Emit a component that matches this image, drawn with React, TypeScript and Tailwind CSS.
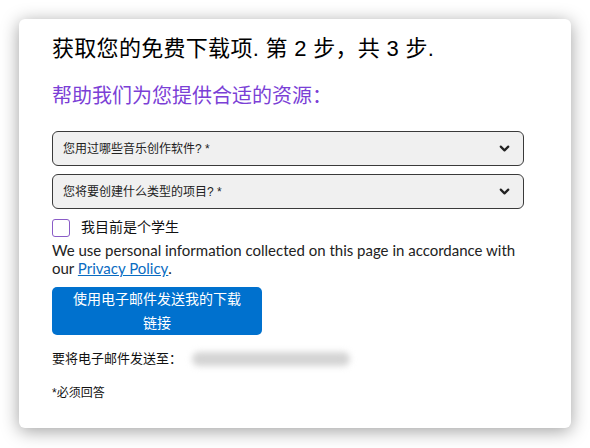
import { ChevronDown } from 'lucide-react';

const cjk = 'font-["Liberation_Sans","Noto_Sans_CJK_SC",sans-serif]';

function SelectBox({ label }: { label: string }) {
  return (
    <div className="flex h-[35px] items-center justify-between rounded-md border border-[#3a3a3a] bg-[#f0f0f0] pl-[10px] pr-[11px]">
      <span className="text-[12px] text-[#222]">{label}</span>
      <ChevronDown size={15} strokeWidth={3.5} className="text-[#222]" />
    </div>
  );
}

export default function App() {
  return (
    <div className={`h-[448px] w-[590px] bg-white pl-[19px] pt-[19px] ${cjk}`}>
      <div className="h-[409px] w-[552px] rounded-md bg-white pl-[33px] pr-[47px] pt-[16px] shadow-[0_3px_18px_rgba(0,0,0,0.38)]">
        <h1 className="text-[22px] leading-[28px] tracking-[0.3px] text-black">获取您的免费下载项. 第 2 步，共 3 步.</h1>
        <h2 className="mt-[19px] text-[20px] leading-[28px] text-[#7b3fd6]">帮助我们为您提供合适的资源：</h2>

        <div className="mt-[21px] flex flex-col gap-[8px]">
          <SelectBox label="您用过哪些音乐创作软件? *" />
          <SelectBox label="您将要创建什么类型的项目? *" />
        </div>

        <label className="mt-[8px] flex items-center gap-[11px]">
          <span className="h-[18px] w-[18px] rounded-[3px] border-[1.5px] border-[#8a5cc7] bg-white" />
          <span className="text-[14px] text-[#111]">我目前是个学生</span>
        </label>

        <div className='mt-[3px] font-["Lato",sans-serif] text-[15px] leading-[18px] text-[#222]'>
          <p className="whitespace-nowrap">We use personal information collected on this page in accordance with</p>
          <p>
            our <a className="inline-block text-[#0a6cc2] underline">Privacy Policy</a>.
          </p>
        </div>

        <button className="mt-[10px] flex h-[48px] w-[210px] items-center justify-center rounded-[5px] bg-[#0071ce] px-[20px] text-[14px] leading-[24px] text-white">
          使用电子邮件发送我的下载链接
        </button>

        <div className="mt-[15px] flex items-center gap-[10px]">
          <span className="text-[13px] leading-[18px] text-[#111]">要将电子邮件发送至：</span>
          <span className="h-[14px] w-[158px] rounded-full bg-[#d4d4d4] blur-[3px]" />
        </div>

        <p className="mt-[16px] text-[12px] leading-[18px] text-[#111]">*必须回答</p>
      </div>
    </div>
  );
}
